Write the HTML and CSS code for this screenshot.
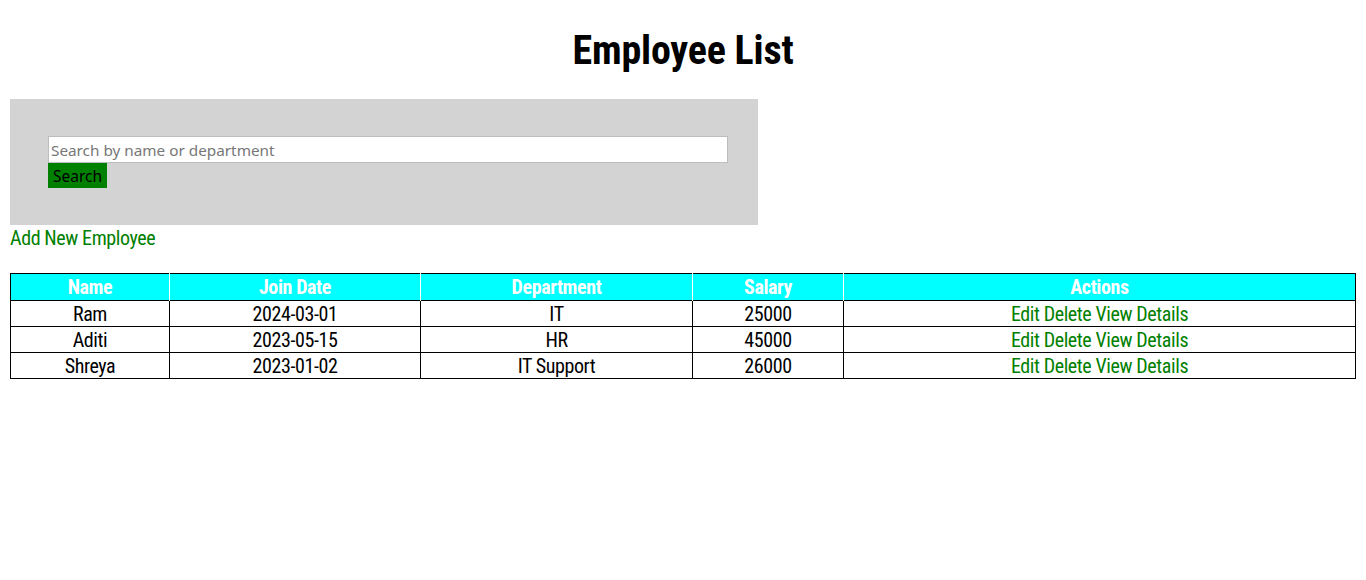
FILE: index.html
```html
<!DOCTYPE html>
<html>
<head>
<meta charset="utf-8">
<link rel="stylesheet" href="styles.css">
</head>
<body>
<h1 class="title">Employee List</h1>
<form class="search-box">
  <input class="search-input" type="text" placeholder="Search by name or department">
  <button class="search-btn" type="button">Search</button>
</form>
<a class="add-link" href="#">Add New Employee</a>
<table class="emp-table">
  <thead>
    <tr>
      <th class="c-name">Name</th>
      <th class="c-date">Join Date</th>
      <th class="c-dept">Department</th>
      <th class="c-sal">Salary</th>
      <th class="c-act">Actions</th>
    </tr>
  </thead>
  <tbody>
    <tr><td>Ram</td><td>2024-03-01</td><td>IT</td><td>25000</td><td><a href="#">Edit</a> <a href="#">Delete</a> <a href="#">View Details</a></td></tr>
    <tr><td>Aditi</td><td>2023-05-15</td><td>HR</td><td>45000</td><td><a href="#">Edit</a> <a href="#">Delete</a> <a href="#">View Details</a></td></tr>
    <tr><td>Shreya</td><td>2023-01-02</td><td>IT Support</td><td>26000</td><td><a href="#">Edit</a> <a href="#">Delete</a> <a href="#">View Details</a></td></tr>
  </tbody>
</table>
</body>
</html>
```
FILE: styles.css
```css
body {
  margin: 10px;
  font-family: "Roboto Condensed", "Liberation Sans", sans-serif;
  font-size: 20px;
  font-weight: 400;
  letter-spacing: -0.4px;
  color: #000;
  background: #fff;
}
.title {
  text-align: center;
  font-size: 40px;
  font-weight: 700;
  letter-spacing: -0.2px;
  margin: 18px 0 25px;
  line-height: 46px;
}
.search-box {
  display: flex;
  flex-direction: column;
  align-items: flex-start;
  width: 748px;
  box-sizing: border-box;
  padding: 37px 30px 37px 38px;
  background: #d3d3d3;
  margin: 0;
}
.search-input {
  width: 680px;
  height: 27px;
  box-sizing: border-box;
  border: 1px solid #bdbdbd;
  padding: 0 2px;
  margin: 0;
  font-family: "Noto Sans", "Open Sans", sans-serif;
  font-size: 15.3px;
  font-weight: 400;
  letter-spacing: 0;
  color: #000;
  background: #fff;
}
.search-input::placeholder {
  color: #777;
}
.search-btn {
  height: 25px;
  margin: 0;
  padding: 0 5px;
  border: none;
  background: #008000;
  color: #000;
  font-family: "Noto Sans", "Open Sans", sans-serif;
  font-size: 15.5px;
  font-weight: 400;
  letter-spacing: 0;
}
.add-link {
  display: block;
  margin-top: 1px;
  color: #008000;
  text-decoration: none;
  line-height: 24px;
}
.emp-table {
  margin-top: 23px;
  width: 100%;
  border-collapse: collapse;
  border: 1px solid #000;
}
.emp-table th {
  background: #00ffff;
  color: #fff;
  font-weight: 700;
  border-left: 1px solid #fff;
  height: 25px;
  padding: 1px 0 0;
  line-height: 25px;
}
.emp-table th:first-child {
  border-left: none;
}
.emp-table td {
  border: 1px solid #000;
  text-align: center;
  padding: 1px 0 0;
  height: 24px;
  line-height: 24px;
}
.emp-table td a {
  color: #008000;
  text-decoration: none;
}
.c-name { width: 158px; }
.c-date { width: 250px; }
.c-dept { width: 271px; }
.c-sal { width: 150px; }
```
